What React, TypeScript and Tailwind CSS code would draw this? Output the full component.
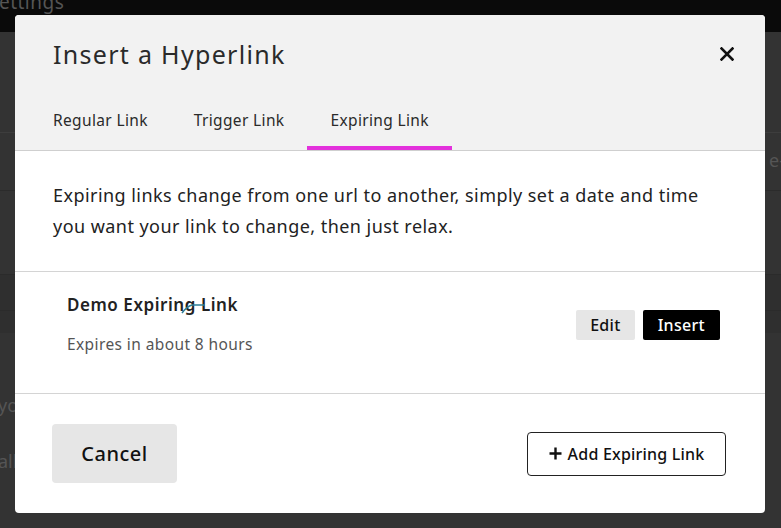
import React from "react";

export default function App() {
  const font = { fontFamily: "'Noto Sans', Lato, sans-serif" };
  return (
    <div className="relative w-[781px] h-[528px] overflow-hidden bg-[#333333]" style={font}>
      {/* Background page (dimmed) */}
      <div className="flex flex-col h-full">
        <div className="h-[32px] bg-[#0a0a0a] flex items-start">
          <span className="text-[#555] text-[19px] leading-none -mt-[7px] -ml-[12px] tracking-[0.5px]">Settings</span>
        </div>
        <div className="h-[101px] border-b border-[#3d3d3d]"></div>
        <div className="h-[58px] border-b border-[#2b2b2b] flex justify-end items-center">
          <span className="text-[#555] text-[18px] -mr-[4px] -mt-[2px]">e-</span>
        </div>
        <div className="h-[84px] border-b border-[#2b2b2b]"></div>
        <div className="h-[36px] bg-[#2f2f2f] border-b border-[#2b2b2b]"></div>
        <div className="h-[22px] bg-[#2f2f2f]"></div>
        <div className="flex-1 flex flex-col pt-[63px] gap-[38px]">
          <span className="text-[#555] text-[18px] -ml-[2px] leading-none">you</span>
          <span className="text-[#555] text-[18px] -ml-[2px] leading-none">ally</span>
        </div>
      </div>

      {/* Modal */}
      <div className="absolute left-[15px] top-[15px] w-[750px] h-[498px] bg-white rounded-[4px] overflow-hidden flex flex-col">
        <div className="bg-[#f2f2f2] border-b border-[#cfcfcf]">
          <div className="h-[85px] flex items-start justify-between pl-[38px] pr-[31px] pt-[23px]">
            <h1 className="text-[25px] leading-[32px] text-[#2a2a2a] tracking-[1.3px]">Insert a Hyperlink</h1>
            <svg width="14" height="14" viewBox="0 0 14 14" className="mt-[9px]">
              <path d="M1.5 1.5 L12.5 12.5 M12.5 1.5 L1.5 12.5" stroke="#111" strokeWidth="2.6" strokeLinecap="square" />
            </svg>
          </div>
          <div className="flex pl-[15px]">
            {["Regular Link", "Trigger Link", "Expiring Link"].map((t, i) => (
              <div
                key={t}
                className={
                  i === 2
                    ? "px-[23px] pt-[8px] pb-[14px] border-b-4 border-[#e331dc] text-[15.5px] leading-[24px] tracking-[0.35px] text-[#2b2b2b]"
                    : "px-[23px] pt-[8px] pb-[14px] border-b-4 border-transparent text-[15.5px] leading-[24px] tracking-[0.35px] text-[#2b2b2b]"
                }
              >
                {t}
              </div>
            ))}
          </div>
        </div>

        <div className="px-[38px] pt-[29px] pb-[29px] border-b border-[#d4d4d4]">
          <p className="text-[18px] leading-[31px] tracking-[0.45px] text-[#222]">
            Expiring links change from one url to another, simply set a date and time you want your link to change, then just relax.
          </p>
        </div>

        <div className="flex justify-between pl-[52px] pr-[45px] pt-[21px] pb-[38px] border-b border-[#d4d4d4]">
          <div className="flex flex-col gap-[16px]">
            <span className="text-[17px] leading-[24px] font-semibold tracking-[0.55px] text-[#222]">
              Demo Expirin
              <span className="relative">
                g
                <svg className="absolute left-[-4px] top-[8px]" width="26" height="14" viewBox="0 0 26 14">
                  <path d="M1 12 C4 8 7 5 11 4 L24 4" stroke="#2c7d96" strokeWidth="1.6" fill="none" />
                </svg>
              </span>{" "}
              Link
            </span>
            <span className="text-[15.5px] leading-[22px] tracking-[0.4px] text-[#555]">Expires in about 8 hours</span>
          </div>
          <div className="flex gap-[8px] mt-[17px]">
            <button className="h-[30px] px-[14px] bg-[#e6e6e6] rounded-[2px] text-[16px] tracking-[0.3px] text-[#111] font-medium">Edit</button>
            <button className="h-[30px] px-[15px] bg-black rounded-[2px] text-[16px] tracking-[0.3px] text-white font-medium">Insert</button>
          </div>
        </div>

        <div className="flex-1 flex items-center justify-between pl-[37px] pr-[39px]">
          <button className="w-[125px] h-[59px] bg-[#e6e6e6] rounded-[4px] text-[20px] tracking-[0.5px] font-medium text-[#111]">Cancel</button>
          <button className="w-[199px] h-[44px] border border-[#222] rounded-[4px] flex items-center justify-center gap-[6px] text-[16px] tracking-[0.2px] font-medium text-[#111]">
            <svg width="13" height="13" viewBox="0 0 13 13">
              <path d="M6.5 0.5 V12.5 M0.5 6.5 H12.5" stroke="#111" strokeWidth="2.4" />
            </svg>
            Add Expiring Link
          </button>
        </div>
      </div>
    </div>
  );
}
